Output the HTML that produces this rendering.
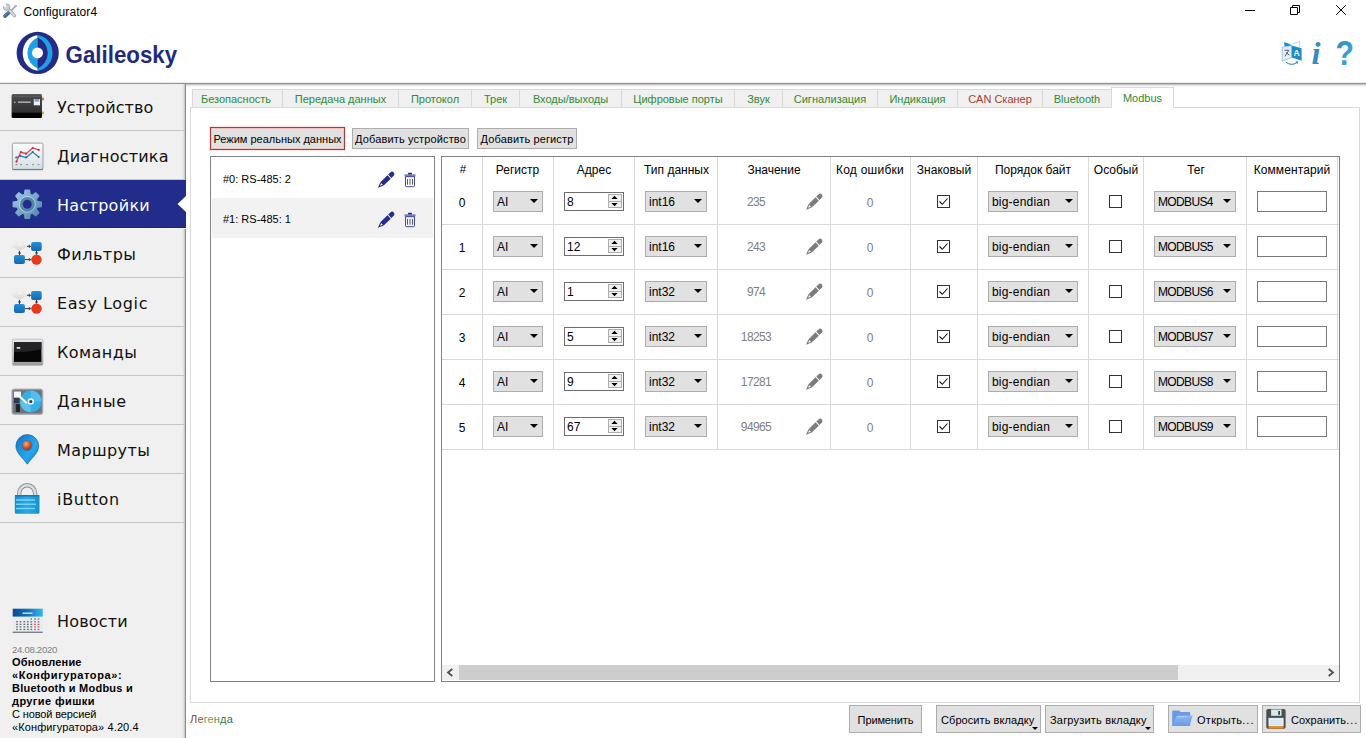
<!DOCTYPE html>
<html lang="ru"><head><meta charset="utf-8"><title>Configurator4</title>
<style>
html,body{margin:0;padding:0}
body{width:1366px;height:738px;position:relative;overflow:hidden;background:#fff;font-family:"Liberation Sans","DejaVu Sans",sans-serif;font-size:11px;color:#000}
.a{position:absolute}
.t{position:absolute;white-space:nowrap;line-height:1}
svg{position:absolute;overflow:visible}
#title{left:23.4px;top:6px;font-size:12px;letter-spacing:.08px}
#hline{left:0;top:82px;width:1366px;height:5px;background:linear-gradient(#ececec 0,#ececec 1px,#949494 1px,#949494 2px,#c4c4c4 2px,#c4c4c4 3px,#e8e8e8 3px,#e8e8e8 4px,#f8f8f8 4px,#f8f8f8 5px)}
#side{left:0;top:84px;width:185px;height:654px;background:linear-gradient(90deg,#f0f0f0 182px,#e2e2e2 183.500px,#c2c2c2 185px);border-right:1px solid #8a8a8a}
.mi{position:absolute;left:0;width:185px;border-bottom:1px solid #c6c6c6}
.mi .t{left:57px;letter-spacing:.18px;font-family:"DejaVu Sans","Liberation Sans",sans-serif;font-size:16px;color:#111}
.mi.on{background:#212c8b;border-bottom-color:#f5f6fa;width:186px;box-shadow:inset 0 -1px 0 #1e2678}
.mi.on .t{color:#fff}
#news .t{left:12px}
.tab{position:absolute;top:89px;height:18px;border:1px solid #d9d9d9;border-bottom:none;border-right:none;background:#f0f0f0;box-sizing:border-box;color:#2e8b35;font-size:11px;line-height:19px;text-align:center;white-space:nowrap}
.tab.on{top:87px;height:21px;background:#fff;border-right:1px solid #d9d9d9;line-height:21px;z-index:2}
#pane{left:190px;top:107px;width:1170px;height:596px;border:1px solid #d9d9d9;box-sizing:border-box}
.btn{position:absolute;box-sizing:border-box;background:#e1e1e1;border:1px solid #adadad;font-size:11px;white-space:nowrap;text-align:center}
#list{left:210px;top:156px;width:225px;height:526px;border:1px solid #828282;box-sizing:border-box}
.li{position:absolute;left:1px;width:221px;height:40px}
.li .t{left:11px;top:16px;font-size:11px}
#tbl{left:441px;top:156px;width:899px;height:526px;border:1px solid #828282;box-sizing:border-box;overflow:hidden}
.vl{position:absolute;top:0;width:1px;height:293px;background:#d9d9d9}
.hl{position:absolute;left:0;width:897px;height:1px;background:#d9d9d9}
.th{position:absolute;top:6px;font-size:12px;line-height:14px;text-align:center;white-space:nowrap}
.c{position:absolute;font-size:12px;line-height:14px;white-space:nowrap}
.g{color:#808080}
.sl{position:absolute;box-sizing:border-box;height:21px;background:#e1e1e1;border:1px solid #adadad;font-size:12px;line-height:21px;padding-left:3px;white-space:nowrap}
.sl i{position:absolute;right:4.300px;top:7px;width:0;height:0;border-left:4px solid transparent;border-right:4px solid transparent;border-top:4.600px solid #000}
.sp{position:absolute;box-sizing:border-box;height:19px;width:60px;background:#fff;border:1px solid #6e6e6e;font-size:12px;line-height:19px;padding-left:2px}
.in{position:absolute;box-sizing:border-box;height:21px;width:70px;background:#fff;border:1px solid #7a7a7a}
.cb{position:absolute;box-sizing:border-box;width:13px;height:13px;border:1px solid #333;background:#fff}
</style></head>
<body>
<div class="t" id="title">Configurator4</div>
<svg style="left:1240px;top:0" width="120" height="22" viewBox="0 0 120 22" fill="none" stroke="#000" stroke-width="1"><path d="M5 10.500h10"/><path d="M50.500 7.500h7v7h-7z M52.500 7.500v-2h7v7h-2"/><path d="M96.200 5.200l9.600 9.600M105.800 5.200l-9.600 9.600"/></svg>
<svg style="left:0;top:26px" width="190" height="54" viewBox="0 26 190 54"><circle cx="37.700" cy="52.900" r="21.100" fill="#242a86"/><path d="M37.600 35.200A16.100 17.800 0 0 0 37.600 70.700z" fill="#fff"/><path d="M37.600 35.200A16.100 17.800 0 0 1 37.600 70.700z" fill="#1ea0e6"/><path d="M37.600 37.500A16.900 16.900 0 0 0 37.600 68.500z" fill="#1ea0e6"/><path d="M37.600 37.500A16.900 16.900 0 0 1 37.600 68.500z" fill="#242a86"/><circle cx="37.500" cy="52.900" r="5.500" fill="#fff"/><text x="65.600" y="62.800" font-family="Liberation Sans, sans-serif" font-weight="bold" font-size="24" fill="#232a7e" textLength="111.500" lengthAdjust="spacingAndGlyphs">Galileosky</text></svg>
<div class="a" id="hline"></div>
<div class="a" id="side">
<div class="mi" style="top:0px;height:46px"><div class="t" style="top:16px;letter-spacing:0.08px">Устройство</div></div>
<div class="mi" style="top:47px;height:48px"><div class="t" style="top:18px;letter-spacing:0.22px">Диагностика</div></div>
<div class="mi on" style="top:96px;height:48px"><div class="t" style="top:18px;letter-spacing:0.3px">Настройки</div></div>
<div class="mi" style="top:145px;height:48px"><div class="t" style="top:18px;letter-spacing:0.5px">Фильтры</div></div>
<div class="mi" style="top:194px;height:48px"><div class="t" style="top:18px;letter-spacing:0.65px">Easy Logic</div></div>
<div class="mi" style="top:243px;height:48px"><div class="t" style="top:18px;letter-spacing:0.45px">Команды</div></div>
<div class="mi" style="top:292px;height:48px"><div class="t" style="top:18px;letter-spacing:0.7px">Данные</div></div>
<div class="mi" style="top:341px;height:48px"><div class="t" style="top:18px;letter-spacing:0.4px">Маршруты</div></div>
<div class="mi" style="top:390px;height:48px"><div class="t" style="top:18px;letter-spacing:0.7px">iButton</div></div>
<svg style="left:177px;top:112px" width="9" height="16" viewBox="0 0 9 16"><path d="M9 0L0.500 8L9 16z" fill="#fff"/></svg>
<div id="news"><div class="t" style="left:57px;top:530px;letter-spacing:.18px;font-family:'DejaVu Sans','Liberation Sans',sans-serif;font-size:16px;color:#111">Новости</div>
<div class="t g" style="top:560.5px;font-size:9.6px;letter-spacing:-.3px">24.08.2020</div>
<div class="t" style="top:573px;font-weight:bold;letter-spacing:0.18px">Обновление</div>
<div class="t" style="top:586px;font-weight:bold;letter-spacing:0.6px">«Конфигуратора»:</div>
<div class="t" style="top:599px;font-weight:bold;letter-spacing:0.24px">Bluetooth и Modbus и</div>
<div class="t" style="top:612px;font-weight:bold;letter-spacing:0.4px">другие фишки</div>
<div class="t" style="top:625px;letter-spacing:-.13px">С новой версией</div>
<div class="t" style="top:638px;letter-spacing:.11px">«Конфигуратора» 4.20.4</div>
</div>
</div>
<div class="a" id="pane"></div>
<div class="tab" style="left:192px;width:90px;padding-right:3px">Безопасность</div>
<div class="tab" style="left:282px;width:116px">Передача данных</div>
<div class="tab" style="left:398px;width:73px">Протокол</div>
<div class="tab" style="left:471px;width:48px">Трек</div>
<div class="tab" style="left:519px;width:102px">Входы/выходы</div>
<div class="tab" style="left:621px;width:113px">Цифровые порты</div>
<div class="tab" style="left:734px;width:48px">Звук</div>
<div class="tab" style="left:782px;width:95px">Сигнализация</div>
<div class="tab" style="left:877px;width:80px">Индикация</div>
<div class="tab" style="left:957px;width:85px;color:#a8402c">CAN Сканер</div>
<div class="tab" style="left:1042px;width:69px;border-right:1px solid #d9d9d9;width:70px">Bluetooth</div>
<div class="tab on" style="left:1111px;width:63px">Modbus</div>
<div class="btn" style="left:210px;top:127px;width:135px;height:23px;border:1px solid #a23e3e;line-height:23px;box-shadow:inset 0 0 0 1px #f2c2c2,0 0 1px 1px #fbe4e4">Режим реальных данных</div>
<div class="btn" style="left:352px;top:128px;width:117px;height:21px;line-height:21px;letter-spacing:.13px">Добавить устройство</div>
<div class="btn" style="left:477px;top:128px;width:100px;height:21px;line-height:21px;letter-spacing:.13px">Добавить регистр</div>
<div class="a" id="list">
<div class="li" style="top:1px"><div class="t">#0: RS-485: 2</div></div>
<div class="li" style="top:41px;background:#f2f2f2"><div class="t">#1: RS-485: 1</div></div>
</div>
<div class="a" id="tbl">
<div class="vl" style="left:40px"></div><div class="vl" style="left:111px"></div><div class="vl" style="left:192px"></div><div class="vl" style="left:275px"></div><div class="vl" style="left:388px"></div><div class="vl" style="left:468px"></div><div class="vl" style="left:535px"></div><div class="vl" style="left:646px"></div><div class="vl" style="left:701px"></div><div class="vl" style="left:804px"></div><div class="vl" style="left:895px"></div>
<div class="hl" style="top:67px"></div><div class="hl" style="top:112px"></div><div class="hl" style="top:157px"></div><div class="hl" style="top:202px"></div><div class="hl" style="top:247px"></div><div class="hl" style="top:292px"></div>
<div class="th" style="left:0px;width:40px;top:5px;font-size:11.5px;padding-left:1px">#</div><div class="th" style="left:40px;width:71px">Регистр</div><div class="th" style="left:111px;width:82px">Адрес</div><div class="th" style="left:193px;width:83px">Тип данных</div><div class="th" style="left:276px;width:112px">Значение</div><div class="th" style="left:388px;width:80px;letter-spacing:.25px">Код ошибки</div><div class="th" style="left:468px;width:68px">Знаковый</div><div class="th" style="left:536px;width:110px">Порядок байт</div><div class="th" style="left:646px;width:56px">Особый</div><div class="th" style="left:702px;width:102px;padding-left:1px">Тег</div><div class="th" style="left:804px;width:92px;letter-spacing:.1px">Комментарий</div>
<div class="c" style="left:-0.5px;top:39px;width:41px;text-align:center">0</div><div class="sl" style="left:51px;top:34px;width:50px">AI<i></i></div><div class="sp" style="left:122px;top:35px">8<svg style="left:43px;top:1px" width="14" height="14" viewBox="0 0 14 14"><rect x=".5" y=".5" width="13" height="13" fill="#f0f0f0" stroke="#adadad"/><path d="M1 7.500h12" stroke="#adadad"/><path d="M3.400 5.100h6.200l-3.100-3.300zM3.400 8.900h6.200l-3.100 3.300z" fill="#000"/></svg></div><div class="sl" style="left:203px;top:34px;width:62px">int16<i></i></div><div class="c g" style="left:275px;top:38px;width:78px;text-align:center;letter-spacing:-.6px">235</div><div class="c g" style="left:388px;top:39px;width:80px;text-align:center">0</div><div class="cb" style="left:495px;top:38px"><svg style="left:0;top:0" width="11" height="11" viewBox="0 0 11 11"><path d="M1.500 5.500L4.300 8.300L9.500 2.500" fill="none" stroke="#111" stroke-width="1.100"/></svg></div><div class="sl" style="left:546px;top:34px;width:90px;letter-spacing:.2px">big-endian<i></i></div><div class="cb" style="left:667px;top:38px"></div><div class="sl" style="left:712px;top:34px;width:82px;letter-spacing:-.65px">MODBUS4<i></i></div><div class="in" style="left:815px;top:34px"></div>
<div class="c" style="left:-0.5px;top:84px;width:41px;text-align:center">1</div><div class="sl" style="left:51px;top:79px;width:50px">AI<i></i></div><div class="sp" style="left:122px;top:80px">12<svg style="left:43px;top:1px" width="14" height="14" viewBox="0 0 14 14"><rect x=".5" y=".5" width="13" height="13" fill="#f0f0f0" stroke="#adadad"/><path d="M1 7.500h12" stroke="#adadad"/><path d="M3.400 5.100h6.200l-3.100-3.300zM3.400 8.900h6.200l-3.100 3.300z" fill="#000"/></svg></div><div class="sl" style="left:203px;top:79px;width:62px">int16<i></i></div><div class="c g" style="left:275px;top:83px;width:78px;text-align:center;letter-spacing:-.6px">243</div><div class="c g" style="left:388px;top:84px;width:80px;text-align:center">0</div><div class="cb" style="left:495px;top:83px"><svg style="left:0;top:0" width="11" height="11" viewBox="0 0 11 11"><path d="M1.500 5.500L4.300 8.300L9.500 2.500" fill="none" stroke="#111" stroke-width="1.100"/></svg></div><div class="sl" style="left:546px;top:79px;width:90px;letter-spacing:.2px">big-endian<i></i></div><div class="cb" style="left:667px;top:83px"></div><div class="sl" style="left:712px;top:79px;width:82px;letter-spacing:-.65px">MODBUS5<i></i></div><div class="in" style="left:815px;top:79px"></div>
<div class="c" style="left:-0.5px;top:129px;width:41px;text-align:center">2</div><div class="sl" style="left:51px;top:124px;width:50px">AI<i></i></div><div class="sp" style="left:122px;top:125px">1<svg style="left:43px;top:1px" width="14" height="14" viewBox="0 0 14 14"><rect x=".5" y=".5" width="13" height="13" fill="#f0f0f0" stroke="#adadad"/><path d="M1 7.500h12" stroke="#adadad"/><path d="M3.400 5.100h6.200l-3.100-3.300zM3.400 8.900h6.200l-3.100 3.300z" fill="#000"/></svg></div><div class="sl" style="left:203px;top:124px;width:62px">int32<i></i></div><div class="c g" style="left:275px;top:128px;width:78px;text-align:center;letter-spacing:-.6px">974</div><div class="c g" style="left:388px;top:129px;width:80px;text-align:center">0</div><div class="cb" style="left:495px;top:128px"><svg style="left:0;top:0" width="11" height="11" viewBox="0 0 11 11"><path d="M1.500 5.500L4.300 8.300L9.500 2.500" fill="none" stroke="#111" stroke-width="1.100"/></svg></div><div class="sl" style="left:546px;top:124px;width:90px;letter-spacing:.2px">big-endian<i></i></div><div class="cb" style="left:667px;top:128px"></div><div class="sl" style="left:712px;top:124px;width:82px;letter-spacing:-.65px">MODBUS6<i></i></div><div class="in" style="left:815px;top:124px"></div>
<div class="c" style="left:-0.5px;top:174px;width:41px;text-align:center">3</div><div class="sl" style="left:51px;top:169px;width:50px">AI<i></i></div><div class="sp" style="left:122px;top:170px">5<svg style="left:43px;top:1px" width="14" height="14" viewBox="0 0 14 14"><rect x=".5" y=".5" width="13" height="13" fill="#f0f0f0" stroke="#adadad"/><path d="M1 7.500h12" stroke="#adadad"/><path d="M3.400 5.100h6.200l-3.100-3.300zM3.400 8.900h6.200l-3.100 3.300z" fill="#000"/></svg></div><div class="sl" style="left:203px;top:169px;width:62px">int32<i></i></div><div class="c g" style="left:275px;top:173px;width:78px;text-align:center;letter-spacing:-.6px">18253</div><div class="c g" style="left:388px;top:174px;width:80px;text-align:center">0</div><div class="cb" style="left:495px;top:173px"><svg style="left:0;top:0" width="11" height="11" viewBox="0 0 11 11"><path d="M1.500 5.500L4.300 8.300L9.500 2.500" fill="none" stroke="#111" stroke-width="1.100"/></svg></div><div class="sl" style="left:546px;top:169px;width:90px;letter-spacing:.2px">big-endian<i></i></div><div class="cb" style="left:667px;top:173px"></div><div class="sl" style="left:712px;top:169px;width:82px;letter-spacing:-.65px">MODBUS7<i></i></div><div class="in" style="left:815px;top:169px"></div>
<div class="c" style="left:-0.5px;top:219px;width:41px;text-align:center">4</div><div class="sl" style="left:51px;top:214px;width:50px">AI<i></i></div><div class="sp" style="left:122px;top:215px">9<svg style="left:43px;top:1px" width="14" height="14" viewBox="0 0 14 14"><rect x=".5" y=".5" width="13" height="13" fill="#f0f0f0" stroke="#adadad"/><path d="M1 7.500h12" stroke="#adadad"/><path d="M3.400 5.100h6.200l-3.100-3.300zM3.400 8.900h6.200l-3.100 3.300z" fill="#000"/></svg></div><div class="sl" style="left:203px;top:214px;width:62px">int32<i></i></div><div class="c g" style="left:275px;top:218px;width:78px;text-align:center;letter-spacing:-.6px">17281</div><div class="c g" style="left:388px;top:219px;width:80px;text-align:center">0</div><div class="cb" style="left:495px;top:218px"><svg style="left:0;top:0" width="11" height="11" viewBox="0 0 11 11"><path d="M1.500 5.500L4.300 8.300L9.500 2.500" fill="none" stroke="#111" stroke-width="1.100"/></svg></div><div class="sl" style="left:546px;top:214px;width:90px;letter-spacing:.2px">big-endian<i></i></div><div class="cb" style="left:667px;top:218px"></div><div class="sl" style="left:712px;top:214px;width:82px;letter-spacing:-.65px">MODBUS8<i></i></div><div class="in" style="left:815px;top:214px"></div>
<div class="c" style="left:-0.5px;top:264px;width:41px;text-align:center">5</div><div class="sl" style="left:51px;top:259px;width:50px">AI<i></i></div><div class="sp" style="left:122px;top:260px">67<svg style="left:43px;top:1px" width="14" height="14" viewBox="0 0 14 14"><rect x=".5" y=".5" width="13" height="13" fill="#f0f0f0" stroke="#adadad"/><path d="M1 7.500h12" stroke="#adadad"/><path d="M3.400 5.100h6.200l-3.100-3.300zM3.400 8.900h6.200l-3.100 3.300z" fill="#000"/></svg></div><div class="sl" style="left:203px;top:259px;width:62px">int32<i></i></div><div class="c g" style="left:275px;top:263px;width:78px;text-align:center;letter-spacing:-.6px">94965</div><div class="c g" style="left:388px;top:264px;width:80px;text-align:center">0</div><div class="cb" style="left:495px;top:263px"><svg style="left:0;top:0" width="11" height="11" viewBox="0 0 11 11"><path d="M1.500 5.500L4.300 8.300L9.500 2.500" fill="none" stroke="#111" stroke-width="1.100"/></svg></div><div class="sl" style="left:546px;top:259px;width:90px;letter-spacing:.2px">big-endian<i></i></div><div class="cb" style="left:667px;top:263px"></div><div class="sl" style="left:712px;top:259px;width:82px;letter-spacing:-.65px">MODBUS9<i></i></div><div class="in" style="left:815px;top:259px"></div>
<div class="a" style="left:0;top:508px;width:897px;height:15px;background:#f0f0f0"></div><div class="a" style="left:17px;top:508px;width:719px;height:15px;background:#cdcdcd"></div><svg style="left:4px;top:511px" width="8" height="9" viewBox="0 0 8 9"><path d="M6.300 1L2 4.500L6.300 8" fill="none" stroke="#505050" stroke-width="1.800"/></svg><svg style="left:885px;top:511px" width="8" height="9" viewBox="0 0 8 9"><path d="M1.700 1L6 4.500L1.700 8" fill="none" stroke="#505050" stroke-width="1.800"/></svg></div>
<div class="t" style="left:190px;top:714px;font-size:11px;letter-spacing:.15px"><span style="color:#8a4636">Л</span><span style="color:#8c5a3c">е</span><span style="color:#9a8848">г</span><span style="color:#86984c">е</span><span style="color:#5e8a48">н</span><span style="color:#3c7a42">д</span><span style="color:#3a6c4a">а</span></div>
<div class="btn" style="left:849px;top:705px;width:73px;height:28px;line-height:28px;letter-spacing:-0.12px">Применить</div>
<div class="btn" style="left:936px;top:705px;width:105px;height:28px;line-height:28px;letter-spacing:0.07px;text-align:left;padding-left:4px">Сбросить вкладку<svg style="right:2px;bottom:2px" width="6" height="3" viewBox="0 0 6 3"><path d="M0 0h6l-3 3z" fill="#000"/></svg></div>
<div class="btn" style="left:1045px;top:705px;width:109px;height:28px;line-height:28px;letter-spacing:0.19px;text-align:left;padding-left:4px">Загрузить вкладку<svg style="right:2px;bottom:2px" width="6" height="3" viewBox="0 0 6 3"><path d="M0 0h6l-3 3z" fill="#000"/></svg></div>
<div class="btn" style="left:1168px;top:705px;width:90px;height:28px;line-height:28px;letter-spacing:0.3px;text-align:left;padding-left:28px">Открыть<span style="letter-spacing:1px">...</span></div>
<div class="btn" style="left:1262px;top:705px;width:99px;height:28px;line-height:28px;letter-spacing:0.05px;text-align:left;padding-left:28px">Сохранить<span style="letter-spacing:1px">...</span></div>
<svg style="left:0;top:0;pointer-events:none" width="1366" height="738" viewBox="0 0 1366 738">
<defs><linearGradient id="gdev" x1="0" y1="0" x2="0" y2="1"><stop offset="0" stop-color="#5a5a5c"/><stop offset=".12" stop-color="#48484a"/><stop offset=".75" stop-color="#303032"/><stop offset=".8" stop-color="#050505"/><stop offset="1" stop-color="#000"/></linearGradient><linearGradient id="gch" x1="0" y1="0" x2="0" y2="1"><stop offset="0" stop-color="#fdfdfd"/><stop offset="1" stop-color="#d4dde6"/></linearGradient><linearGradient id="ggear" x1="0" y1="0" x2="1" y2="1"><stop offset="0" stop-color="#a6cae6"/><stop offset="1" stop-color="#4e84aa"/></linearGradient><linearGradient id="gdia" x1="0" y1="0" x2="0" y2="1"><stop offset="0" stop-color="#fafafa"/><stop offset="1" stop-color="#cfd3d6"/></linearGradient><linearGradient id="gbl" x1="0" y1="0" x2="0" y2="1"><stop offset="0" stop-color="#2590d8"/><stop offset="1" stop-color="#1668b0"/></linearGradient><linearGradient id="gterm" x1="0" y1="0" x2="0" y2="1"><stop offset="0" stop-color="#e8e8e8"/><stop offset="1" stop-color="#9a9a9a"/></linearGradient><linearGradient id="gpin" x1="0" y1="0" x2="1" y2="1"><stop offset="0" stop-color="#1470c4"/><stop offset=".6" stop-color="#27a8ee"/><stop offset="1" stop-color="#1a7cc8"/></linearGradient><radialGradient id="gball" cx=".4" cy=".35" r=".7"><stop offset="0" stop-color="#ffb070"/><stop offset=".5" stop-color="#e0602a"/><stop offset="1" stop-color="#a03010"/></radialGradient><linearGradient id="glock" x1="0" y1="0" x2="1" y2="0"><stop offset="0" stop-color="#1590d0"/><stop offset=".5" stop-color="#28a8e4"/><stop offset="1" stop-color="#1590d0"/></linearGradient><linearGradient id="gcal" x1="0" y1="0" x2="1" y2="0"><stop offset="0" stop-color="#0a4896"/><stop offset=".5" stop-color="#1470c0"/><stop offset="1" stop-color="#30bcf2"/></linearGradient><linearGradient id="gq" x1="0" y1="0" x2="1" y2="1"><stop offset="0" stop-color="#2a86c0"/><stop offset="1" stop-color="#3fb0dc"/></linearGradient><linearGradient id="gfo" x1="0" y1="0" x2="0" y2="1"><stop offset="0" stop-color="#8db8f6"/><stop offset="1" stop-color="#6a9ae6"/></linearGradient></defs>
<g><path d="M16 5.600L10.500 11.300" stroke="#a4a8ad" stroke-width="1.700" stroke-linecap="round" fill="none"/><path d="M15.200 4.800L17 6.600L15.500 7.400L14.200 6.100z" fill="#b0b4b9"/><path d="M9.400 12.100L5 16" stroke="#41699a" stroke-width="3.700" stroke-linecap="round" fill="none"/><path d="M8.800 11.900L4.500 15.600" stroke="#7c9cc4" stroke-width=".9" stroke-linecap="round" fill="none" opacity=".7"/><path d="M8.300 8.800L14.500 15.800" stroke="#989ca0" stroke-width="3.200" stroke-linecap="round" fill="none"/><path d="M8.300 8.800L14.500 15.800" stroke="#d6d8db" stroke-width="2" stroke-linecap="round" fill="none"/><circle cx="6.600" cy="7.200" r="3.300" fill="#cdd0d3" stroke="#989ca0" stroke-width=".7"/><path d="M6.500 7.400L2.400 5.400L5 2.400z" fill="#fff"/></g>
<g><rect x="11.600" y="94.100" width="30.400" height="24" rx="1.500" fill="url(#gdev)"/><rect x="12.600" y="96.200" width="28.400" height=".8" fill="#6a6a6c" opacity=".6"/><path d="M14.200 101.200l1.600 1-1.600 1z" fill="#ccc"/><rect x="18" y="101.400" width="12.800" height="1.600" fill="#a9a9ab"/><rect x="33.800" y="99" width="6.200" height="6.300" fill="#e8f0f8"/><rect x="34.600" y="99" width="4.600" height="2.600" fill="#7aa0d0"/><rect x="42" y="97.600" width="2" height="2.800" rx=".7" fill="#a89a34"/><rect x="42" y="111.600" width="2" height="2.800" rx=".7" fill="#c4b23a"/></g>
<g><rect x="12.400" y="143.100" width="30.600" height="26.300" rx="1.200" fill="url(#gch)" stroke="#9a9ea2" stroke-width="1"/><path d="M12.400 169.600H43" stroke="#7a7e82" stroke-width="1.200"/><path d="M16.200 157.500L20.300 156.100L26.200 157.500L32.700 152.100L38.700 157" fill="none" stroke="#2a86b0" stroke-width="1.300"/><path d="M16.500 161.600L20.800 152.100L26 153.700L32.700 148L38.700 149.900" fill="none" stroke="#e0485a" stroke-width="1.300"/><circle cx="16.5" cy="161.6" r="1.100" fill="#c82c40"/><circle cx="20.8" cy="152.1" r="1.100" fill="#c82c40"/><circle cx="26" cy="153.7" r="1.100" fill="#c82c40"/><circle cx="32.7" cy="148" r="1.100" fill="#c82c40"/><circle cx="38.7" cy="149.9" r="1.100" fill="#c82c40"/><circle cx="16.2" cy="157.5" r="1" fill="#1c7098"/><circle cx="20.3" cy="156.1" r="1" fill="#1c7098"/><circle cx="26.2" cy="157.5" r="1" fill="#1c7098"/><circle cx="32.7" cy="152.1" r="1" fill="#1c7098"/><circle cx="38.7" cy="157" r="1" fill="#1c7098"/><path d="M15.500 164.600h2M20 164.600h2M26 164.600h2M32 164.600h2M37.500 164.600h2" stroke="#8a9298" stroke-width="1"/></g>
<g><path d="M24.46 194.4L25.06 190.18L29.54 190.18L30.14 194.4L32.29 195.29L35.71 192.73L38.87 195.89L36.31 199.31L37.2 201.46L41.42 202.06L41.42 206.54L37.2 207.14L36.31 209.29L38.87 212.71L35.71 215.87L32.29 213.31L30.14 214.2L29.54 218.42L25.06 218.42L24.46 214.2L22.31 213.31L18.89 215.87L15.73 212.71L18.29 209.29L17.4 207.14L13.18 206.54L13.18 202.06L17.4 201.46L18.29 199.31L15.73 195.89L18.89 192.73L22.31 195.29z" fill="url(#ggear)" stroke="url(#ggear)" stroke-width="1.200" stroke-linejoin="round"/><circle cx="27.3" cy="204.3" r="7.900" fill="none" stroke="#c4e0f2" stroke-width="1" opacity=".8"/><circle cx="27.3" cy="204.3" r="5.900" fill="none" stroke="#4b80a6" stroke-width="3" opacity=".85"/><circle cx="27.3" cy="204.3" r="4.500" fill="#212c8b"/></g>
<g transform="translate(0 0)"><path d="M11.900 246.300L19.500 241.700L27.100 246.300L19.500 250.900z" fill="url(#gdia)" stroke="#dcdcdc" stroke-width=".5"/><rect x="31.100" y="242" width="10.600" height="8.900" rx="2" fill="url(#gbl)"/><rect x="14" y="255" width="10.900" height="8.900" rx="2" fill="url(#gbl)"/><circle cx="36.500" cy="259.600" r="5.200" fill="#e8391c"/><path d="M27 246.300H31M29.300 244.800V247.800M19.500 251V255M18 253H21M36.500 251V254.500M35 253H38M25 259.600H31.300M29.300 258.100V261.100" stroke="#3a3a3a" stroke-width="1" fill="none"/></g>
<g transform="translate(0 49)"><path d="M11.900 246.300L19.500 241.700L27.100 246.300L19.500 250.900z" fill="url(#gdia)" stroke="#dcdcdc" stroke-width=".5"/><rect x="31.100" y="242" width="10.600" height="8.900" rx="2" fill="url(#gbl)"/><rect x="14" y="255" width="10.900" height="8.900" rx="2" fill="url(#gbl)"/><circle cx="36.500" cy="259.600" r="5.200" fill="#e8391c"/><path d="M27 246.300H31M29.300 244.800V247.800M19.500 251V255M18 253H21M36.500 251V254.500M35 253H38M25 259.600H31.300M29.300 258.100V261.100" stroke="#3a3a3a" stroke-width="1" fill="none"/></g>
<g><rect x="12.400" y="339.100" width="30.600" height="26.300" rx="1.500" fill="url(#gterm)" stroke="#b4b8bc" stroke-width=".8"/><rect x="13.400" y="340" width="28.600" height="2" fill="#e6e6e6"/><rect x="14" y="342.100" width="27.400" height="19.800" fill="#060606"/><path d="M14 342.100H41.400V349Q30 352.500 14 352z" fill="#242426"/><rect x="16.700" y="347" width="3.600" height="1.800" fill="#d8d8d8"/></g>
<g><rect x="11.900" y="389" width="30.900" height="25.400" rx="2.200" fill="#8a9299" stroke="#a4aab0" stroke-width=".8"/><rect x="13.200" y="390.300" width="28.300" height="22.800" rx="1.500" fill="#6c747a"/><path d="M14 391.500h7v6h-7z" fill="#f2f2f2"/><rect x="14" y="398" width="5.400" height="5" fill="#2e3a50"/><rect x="15.800" y="404" width="4.200" height="8" fill="#20242c"/><circle cx="30.800" cy="401.400" r="10.800" fill="#35aee8"/><path d="M30.800 390.600A10.800 10.800 0 0 1 41.600 401.400H30.800z" fill="#5cc4f2" opacity=".7"/><path d="M30.800 412.200A10.800 10.800 0 0 1 20 401.400H30.800z" fill="#6ccaf4" opacity=".7"/><circle cx="30.800" cy="401.400" r="3.200" fill="#e8f0f4"/><circle cx="30.800" cy="401.400" r="1.500" fill="#30343c"/><path d="M16 393L26 402.500" stroke="#fff" stroke-width="2.200" stroke-linecap="round"/></g>
<g><path d="M27.300 464.200C23 458 15.900 453 15.900 446A11.400 11.400 0 0 1 38.700 446C38.700 453 31.600 458 27.300 464.200z" fill="url(#gpin)" stroke="#10589c" stroke-width=".6"/><circle cx="27.100" cy="445.600" r="5.400" fill="#1464b0" opacity=".55"/><circle cx="27" cy="445.300" r="4.500" fill="url(#gball)"/></g>
<g><path d="M19.200 496V493.200A7.950 7.950 0 0 1 35.100 493.200V496" fill="none" stroke="#909094" stroke-width="4.400"/><path d="M19.200 496V493.200A7.950 7.950 0 0 1 35.100 493.200V496" fill="none" stroke="#dcdce0" stroke-width="2.600"/><rect x="14.800" y="495.100" width="24.700" height="18.700" rx="1.600" fill="url(#glock)"/><path d="M16 500H35M16 504.200H36M16 508.400H35" stroke="#8adcf8" stroke-width="1.500" opacity=".85"/><rect x="14.800" y="495.100" width="24.700" height="1.500" rx=".8" fill="#0f7ab8"/></g>
<g><rect x="12.700" y="616" width="30.100" height="16.800" fill="#e9edf1"/><rect x="12.700" y="631.600" width="30.100" height="1.400" fill="#7e8286"/><rect x="12.700" y="608.700" width="30.100" height="7.900" fill="url(#gcal)"/><rect x="22.500" y="612.500" width="10" height="1.400" fill="#cfe4f6"/><rect x="16.1" y="621.1" width="1.800" height="1.300" fill="#6a6e74"/><rect x="19.6" y="621.1" width="1.800" height="1.300" fill="#6a6e74"/><rect x="23.4" y="621.1" width="1.800" height="1.300" fill="#6a6e74"/><rect x="26.9" y="621.1" width="1.800" height="1.300" fill="#6a6e74"/><rect x="30.4" y="621.1" width="1.800" height="1.300" fill="#6a6e74"/><rect x="34.1" y="621.1" width="1.800" height="1.300" fill="#c85a74"/><rect x="37.6" y="621.1" width="1.800" height="1.300" fill="#c85a74"/><rect x="16.1" y="623.7" width="1.800" height="1.300" fill="#6a6e74"/><rect x="19.6" y="623.7" width="1.800" height="1.300" fill="#6a6e74"/><rect x="23.4" y="623.7" width="1.800" height="1.300" fill="#6a6e74"/><rect x="26.9" y="623.7" width="1.800" height="1.300" fill="#6a6e74"/><rect x="30.4" y="623.7" width="1.800" height="1.300" fill="#6a6e74"/><rect x="34.1" y="623.7" width="1.800" height="1.300" fill="#c85a74"/><rect x="37.6" y="623.7" width="1.800" height="1.300" fill="#c85a74"/><rect x="16.1" y="626.2" width="1.800" height="1.300" fill="#6a6e74"/><rect x="19.6" y="626.2" width="1.800" height="1.300" fill="#6a6e74"/><rect x="23.4" y="626.2" width="1.800" height="1.300" fill="#6a6e74"/><rect x="26.9" y="626.2" width="1.800" height="1.300" fill="#6a6e74"/><rect x="30.4" y="626.2" width="1.800" height="1.300" fill="#6a6e74"/><rect x="34.1" y="626.2" width="1.800" height="1.300" fill="#c85a74"/><rect x="37.6" y="626.2" width="1.800" height="1.300" fill="#c85a74"/><rect x="16.1" y="628.8" width="1.800" height="1.300" fill="#6a6e74"/><rect x="19.6" y="628.8" width="1.800" height="1.300" fill="#6a6e74"/><rect x="23.4" y="628.8" width="1.800" height="1.300" fill="#6a6e74"/><rect x="26.9" y="628.8" width="1.800" height="1.300" fill="#6a6e74"/><rect x="30.4" y="628.8" width="1.800" height="1.300" fill="#6a6e74"/><rect x="34.1" y="628.8" width="1.800" height="1.300" fill="#c85a74"/><rect x="37.6" y="628.8" width="1.800" height="1.300" fill="#c85a74"/><rect x="30.600" y="618.400" width="1.400" height="1.300" fill="#6a6e74"/><rect x="34.100" y="618.400" width="1.800" height="1.300" fill="#6a6e74"/><rect x="37.600" y="618.400" width="1.800" height="1.300" fill="#c85a74"/></g>
<g transform="translate(377.9 187.8) rotate(-44.08) scale(1.02)" fill="#232b8c"><path d="M0 0L5.600 -2.300V2.300z"/><path d="M3 0L5.600 -1.250V1.250z" fill="#fff"/><path d="M5.600 -2.300H15.300V2.300H5.600z"/><path d="M16.200 -2.300H19.300A2.300 2.300 0 0 1 19.300 2.300H16.200z"/></g>
<g transform="translate(404 172.7)"><rect x="4" y="0" width="4" height="2.200" rx=".6" fill="#232b8c"/><rect x=".3" y="1.500" width="11.400" height="2.500" rx="1.100" fill="#7a80b8"/><path d="M1.500 4H10.500V13A1 1 0 0 1 9.500 14H2.500A1 1 0 0 1 1.500 13z" fill="#fff" stroke="#232b8c" stroke-width=".85"/><path d="M3.500 6.300v5.700M6 6.300v5.700M8.500 6.300v5.700" stroke="#50557a" stroke-width="1" fill="none"/></g>
<g transform="translate(377.9 227.8) rotate(-44.08) scale(1.02)" fill="#232b8c"><path d="M0 0L5.600 -2.300V2.300z"/><path d="M3 0L5.600 -1.250V1.250z" fill="#f2f2f2"/><path d="M5.600 -2.300H15.300V2.300H5.600z"/><path d="M16.200 -2.300H19.300A2.300 2.300 0 0 1 19.300 2.300H16.200z"/></g>
<g transform="translate(404 212.7)"><rect x="4" y="0" width="4" height="2.200" rx=".6" fill="#232b8c"/><rect x=".3" y="1.500" width="11.400" height="2.500" rx="1.100" fill="#7a80b8"/><path d="M1.500 4H10.500V13A1 1 0 0 1 9.500 14H2.500A1 1 0 0 1 1.500 13z" fill="#f2f2f2" stroke="#232b8c" stroke-width=".85"/><path d="M3.500 6.300v5.700M6 6.300v5.700M8.500 6.300v5.700" stroke="#50557a" stroke-width="1" fill="none"/></g>
<g transform="translate(806 209.8) rotate(-44.08) scale(1.02)" fill="#7c7c7c"><path d="M0 0L5.600 -2.300V2.300z"/><path d="M3 0L5.600 -1.250V1.250z" fill="#fff"/><path d="M5.600 -2.300H15.300V2.300H5.600z"/><path d="M16.200 -2.300H19.300A2.300 2.300 0 0 1 19.300 2.300H16.200z"/></g>
<g transform="translate(806 254.8) rotate(-44.08) scale(1.02)" fill="#7c7c7c"><path d="M0 0L5.600 -2.300V2.300z"/><path d="M3 0L5.600 -1.250V1.250z" fill="#fff"/><path d="M5.600 -2.300H15.300V2.300H5.600z"/><path d="M16.200 -2.300H19.300A2.300 2.300 0 0 1 19.300 2.300H16.200z"/></g>
<g transform="translate(806 299.8) rotate(-44.08) scale(1.02)" fill="#7c7c7c"><path d="M0 0L5.600 -2.300V2.300z"/><path d="M3 0L5.600 -1.250V1.250z" fill="#fff"/><path d="M5.600 -2.300H15.300V2.300H5.600z"/><path d="M16.200 -2.300H19.300A2.300 2.300 0 0 1 19.300 2.300H16.200z"/></g>
<g transform="translate(806 344.8) rotate(-44.08) scale(1.02)" fill="#7c7c7c"><path d="M0 0L5.600 -2.300V2.300z"/><path d="M3 0L5.600 -1.250V1.250z" fill="#fff"/><path d="M5.600 -2.300H15.300V2.300H5.600z"/><path d="M16.200 -2.300H19.300A2.300 2.300 0 0 1 19.300 2.300H16.200z"/></g>
<g transform="translate(806 389.8) rotate(-44.08) scale(1.02)" fill="#7c7c7c"><path d="M0 0L5.600 -2.300V2.300z"/><path d="M3 0L5.600 -1.250V1.250z" fill="#fff"/><path d="M5.600 -2.300H15.300V2.300H5.600z"/><path d="M16.200 -2.300H19.300A2.300 2.300 0 0 1 19.300 2.300H16.200z"/></g>
<g transform="translate(806 434.8) rotate(-44.08) scale(1.02)" fill="#7c7c7c"><path d="M0 0L5.600 -2.300V2.300z"/><path d="M3 0L5.600 -1.250V1.250z" fill="#fff"/><path d="M5.600 -2.300H15.300V2.300H5.600z"/><path d="M16.200 -2.300H19.300A2.300 2.300 0 0 1 19.300 2.300H16.200z"/></g>
<g><path d="M1284.200 41.900L1291.800 44.900V46.200H1284.500z" fill="#1c8cc8"/><path d="M1292.800 43.900L1299.700 41.600V47.200" fill="none" stroke="#9cc4e4" stroke-width=".7"/><path d="M1282.200 47.200L1291.600 45.500V57.400L1282.200 61.300z" fill="#e6ecf6" stroke="#7ab0dc" stroke-width=".7"/><path d="M1291.800 45.500L1301.500 48.200L1301.700 60.700L1291.800 57.400z" fill="#1c8cc8"/><path d="M1285.900 62.200Q1291.500 66.300 1296.800 62.600" fill="none" stroke="#1c7ca8" stroke-width="1"/><path d="M1295.400 61.200L1298.200 61.400L1297.600 64.300z" fill="#1c8cc8"/><path d="M1284.600 50.300H1288.800L1285 56.300M1286 52.300L1289.400 55.300" fill="none" stroke="#4a5260" stroke-width=".9"/></g>
<text x="1296.500" y="56.400" text-anchor="middle" font-family="Liberation Sans, sans-serif" font-weight="bold" font-size="8.500" fill="#fff">A</text>
<text x="1311.600" y="63.900" font-family="Liberation Serif, serif" font-weight="bold" font-style="italic" font-size="32.500" fill="#2e8cc6">i</text>
<text transform="translate(1335.600 64.900) scale(.865 1)" font-family="Liberation Sans, sans-serif" font-weight="bold" font-size="35" fill="url(#gq)">?</text>
<g><path d="M1172.200 711.500A1 1 0 0 1 1173.200 710.500H1179A1 1 0 0 1 1179.800 711L1180.500 711.900H1189.200A1 1 0 0 1 1190.200 712.900V726H1172.200z" fill="#6b99e2"/><path d="M1176.600 715.800L1192.700 715.400L1189.500 726H1172.500z" fill="url(#gfo)"/><path d="M1177.200 716.600H1187" stroke="#c4dcfa" stroke-width=".7"/></g>
<g><rect x="1266.300" y="709.100" width="19.300" height="19.600" rx="1.600" fill="#4b4f52"/><rect x="1271.100" y="709.500" width="10.400" height="6.300" fill="#d2ecec"/><rect x="1278.300" y="711" width="1.600" height="3.800" fill="#2a3034"/><rect x="1268.500" y="717.900" width="15.100" height="8.100" fill="#eaf0f8"/><path d="M1270 720.300h12M1270 722.500h12M1270 724.500h12" stroke="#b8d0e8" stroke-width=".6"/><rect x="1268.500" y="726" width="15.100" height="2.500" fill="#e0901e"/></g>
</svg>
</body></html>
